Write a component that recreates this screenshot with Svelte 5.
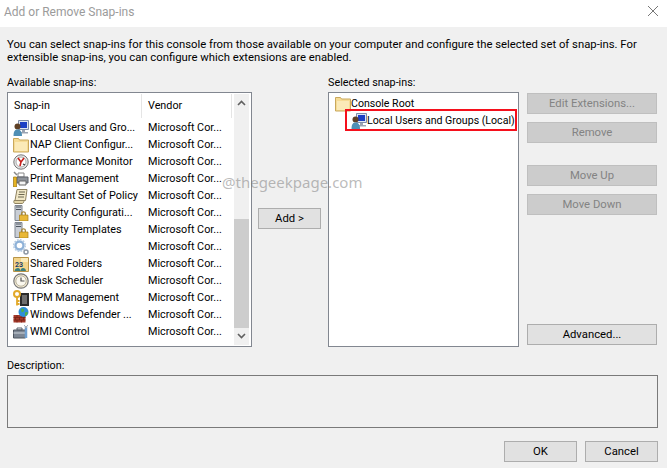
<script lang="ts">
	const vendor = 'Microsoft Cor...';
	const snapins = [
		{ name: 'Local Users and Gro...', icon: 'users' },
		{ name: 'NAP Client Configur...', icon: 'folder' },
		{ name: 'Performance Monitor', icon: 'perf' },
		{ name: 'Print Management', icon: 'print' },
		{ name: 'Resultant Set of Policy', icon: 'scroll' },
		{ name: 'Security Configurati...', icon: 'lock' },
		{ name: 'Security Templates', icon: 'lock' },
		{ name: 'Services', icon: 'gear' },
		{ name: 'Shared Folders', icon: 'shared' },
		{ name: 'Task Scheduler', icon: 'clock' },
		{ name: 'TPM Management', icon: 'tpm' },
		{ name: 'Windows Defender ...', icon: 'wall' },
		{ name: 'WMI Control', icon: 'wmi' }
	];
</script>

{#snippet icon(kind: string)}
	<svg class="icon" viewBox="0 0 16 16" width="16" height="16">
		{#if kind === 'folder'}
			<path d="M0.500 1.500h5l1 1.500h9v12h-15z" fill="#f6dc96" stroke="#c9a85c" />
			<path d="M2 5h12v9H2z" fill="#fbeab8" />
		{:else if kind === 'users'}
			<path d="M5.500 0.500h10v9h-10z" fill="#dfe6f2" stroke="#7f8da8" />
			<path d="M7 2h7v6H7z" fill="#1c3fc4" />
			<path d="M9 10h3v2h3v1.500H7V12h2z" fill="#9aa4b4" />
			<circle cx="4.500" cy="6.500" r="3" fill="#5f4026" />
			<path d="M0.500 16c0-5 1.500-6.500 4-6.500s4.500 1.500 4.500 6.500z" fill="#4f8fb5" />
		{:else if kind === 'perf'}
			<circle cx="8" cy="8" r="7.200" fill="#e8e8e8" stroke="#777" />
			<circle cx="8" cy="8" r="5" fill="#fff" stroke="#aaa" />
			<path d="M5 4l3 4-1 4M8 8l3-4" fill="none" stroke="#c8201c" stroke-width="1.600" />
			<path d="M10 10l2 1" stroke="#333" stroke-width="1.200" />
		{:else if kind === 'print'}
			<path d="M1 1l3 3" stroke="#888" stroke-width="1.500" />
			<path d="M5 2h6v4H5z" fill="#fff" stroke="#888" />
			<path d="M4 6h11v6H4z" fill="#8d9299" stroke="#5c6068" />
			<path d="M6 10h7v4H6z" fill="#f4f4f4" stroke="#666" />
			<path d="M0.500 6h3v10h-3z" fill="#e6b422" stroke="#9a7412" stroke-width="0.700" />
		{:else if kind === 'scroll'}
			<path d="M4 1.500h10l-1.500 11H2z" fill="#f1e8c8" stroke="#8f8260" />
			<path d="M1 12.500h10c0 2-1 3-2 3H2c-1 0-1.500-1.500-1-3z" fill="#e2d5a8" stroke="#8f8260" />
			<path d="M6 4h6M5.500 6.500h6M5 9h6" stroke="#6b6650" />
		{:else if kind === 'lock'}
			<path d="M2 0.500h7v15H2z" fill="#c9ced6" stroke="#7e858f" />
			<path d="M3 2h5M3 4.500h5" stroke="#4e5660" />
			<path d="M8 8.500c0-3 5-3 5 0v2h-1.300V8.500c0-1.300-2.400-1.300-2.400 0v2H8z" fill="#a98a3c" />
			<path d="M6.500 10h8.500v6H6.500z" fill="#e9b838" stroke="#a67f1c" stroke-width="0.700" />
		{:else if kind === 'gear'}
			<circle cx="6.500" cy="6.500" r="4" fill="none" stroke="#8fb2d8" stroke-width="2.400" />
			<circle cx="6.500" cy="6.500" r="5.800" fill="none" stroke="#b5cbe2" stroke-width="1.500" stroke-dasharray="1.800 1.200" />
			<circle cx="13" cy="13" r="2" fill="none" stroke="#8d97a3" stroke-width="1.500" />
		{:else if kind === 'shared'}
			<path d="M0.500 1.500h15v14h-15z" fill="#f3d48a" stroke="#b89448" />
			<path d="M8 2h7v4H8z" fill="#fbeab8" />
			<text class="shared-num" x="2" y="11">23</text>
			<path d="M1.500 15c0-2 2-3 3.500-3s2 1 2.500 3zM7.500 15c0-2 1-3 2.500-3s3 1 3 3z" fill="#3d7f7d" />
		{:else if kind === 'clock'}
			<circle cx="8" cy="8" r="7.200" fill="#f3ead2" stroke="#777" stroke-width="1.200" />
			<circle cx="8" cy="8" r="5.200" fill="#fbf8ee" stroke="#b9b39e" />
			<path d="M8 4.500V8h3.500" fill="none" stroke="#555" stroke-width="1.200" />
		{:else if kind === 'tpm'}
			<path d="M7 3h9v13H7z" fill="#2b2b2b" />
			<path d="M9 5h5v9H9z" fill="#6e6e6e" />
			<circle cx="4" cy="4" r="3" fill="none" stroke="#e2a92a" stroke-width="2" />
			<path d="M4 7v8.500M4 11h2.500M4 14h2.500" stroke="#e2a92a" stroke-width="1.800" fill="none" />
		{:else if kind === 'wall'}
			<path d="M0.500 8h12v7.500H0.500z" fill="#a5392a" />
			<path d="M0.500 10.500h12M0.500 13h12M4 8v2.500M8.500 8v2.500M2.500 10.500V13M6.500 10.500V13M10.500 10.500V13M4 13v2.500M8.500 13v2.500" stroke="#6e2015" stroke-width="0.700" />
			<circle cx="10.500" cy="5" r="5" fill="#2e8fd8" />
			<path d="M8 2c2-1 3 0 3 1.500s-2 2-2.500 1.500zM12 5.500c1-1 2-.5 3 0-.5 2-2 3.500-3 3.500z" fill="#4fb04a" />
		{:else if kind === 'wmi'}
			<path d="M0.500 6h12v8h-12z" fill="#7d8794" stroke="#4e5661" />
			<path d="M4 4h5v2H4z" fill="none" stroke="#59616d" />
			<path d="M0.500 9h12" stroke="#cfd5dc" />
			<path d="M13 2v12" stroke="#6f9fd0" stroke-width="2.500" />
			<path d="M11 1l3 3M15 1l-3 3" stroke="#a4adb8" />
		{/if}
	</svg>
{/snippet}

<div class="dialog">
	<header class="titlebar">
		<span>Add or Remove Snap-ins</span>
		<svg class="close" viewBox="0 0 10 10" width="10" height="10">
			<path d="M0 0l10 10M10 0L0 10" stroke="#777" fill="none" />
		</svg>
	</header>

	<main class="content">
		<p class="intro">
			You can select snap-ins for this console from those available on your computer and configure the selected set of snap-ins. For<br />
			extensible snap-ins, you can configure which extensions are enabled.
		</p>

		<div class="columns">
			<section class="available">
				<div class="label">Available snap-ins:</div>
				<div class="listbox">
					<div class="list">
						<div class="list-head">
							<span class="col-name">Snap-in</span>
							<span class="col-vendor">Vendor</span>
						</div>
						{#each snapins as item}
							<div class="row">
								{@render icon(item.icon)}
								<span class="name">{item.name}</span>
								<span class="vendor">{vendor}</span>
							</div>
						{/each}
					</div>
					<div class="scrollbar">
						<svg class="arrow" viewBox="0 0 9 6" width="9" height="6">
							<path d="M1 5l3.500-3.500L8 5" fill="none" stroke="#606060" stroke-width="1.600" />
						</svg>
						<div class="track"><div class="thumb"></div></div>
						<svg class="arrow" viewBox="0 0 9 6" width="9" height="6">
							<path d="M1 1l3.500 3.500L8 1" fill="none" stroke="#606060" stroke-width="1.600" />
						</svg>
					</div>
				</div>
			</section>

			<div class="add-col">
				<button class="btn add">Add &gt;</button>
			</div>

			<section class="selected">
				<div class="label">Selected snap-ins:</div>
				<div class="tree">
					<div class="node">
						{@render icon('folder')}
						<span>Console Root</span>
					</div>
					<div class="node child">
						{@render icon('users')}
						<span>Local Users and Groups (Local)</span>
					</div>
				</div>
			</section>

			<div class="actions">
				<button class="btn" disabled>Edit Extensions...</button>
				<button class="btn" disabled>Remove</button>
				<button class="btn spaced" disabled>Move Up</button>
				<button class="btn" disabled>Move Down</button>
				<button class="btn advanced">Advanced...</button>
			</div>
		</div>

		<div class="label description-label">Description:</div>
		<div class="description"></div>

		<div class="footer">
			<button class="btn ok">OK</button>
			<button class="btn cancel">Cancel</button>
		</div>
	</main>

	<div class="watermark">@thegeekpage.com</div>
</div>

<style>
	:global(body) {
		margin: 0;
		background: #f0f0f0;
	}

	.dialog {
		position: relative;
		width: 667px;
		height: 468px;
		overflow: hidden;
		background: #f0f0f0;
		color: #000;
		font-family: 'Roboto', sans-serif;
		font-size: 10.8px;
		line-height: 17px;
	}

	.titlebar {
		display: flex;
		align-items: center;
		justify-content: space-between;
		height: 27px;
		padding: 0 9px 3px 4px;
		box-sizing: border-box;
		background: #fff;
		color: #9b9b9b;
		font-size: 12px;
	}

	.close {
		margin-top: -2px;
	}

	.content {
		padding: 11px 9px 0 7px;
	}

	.intro {
		margin: 0;
		font-size: 11.3px;
		line-height: 13px;
		white-space: nowrap;
	}

	.columns {
		display: flex;
		margin-top: 11px;
		height: 272px;
	}

	.label {
		height: 17px;
		line-height: 15px;
	}

	.available {
		width: 245px;
	}

	.listbox {
		display: flex;
		box-sizing: border-box;
		height: 255px;
		border: 1px solid #828790;
		background: #fff;
	}

	.list {
		width: 226px;
	}

	.list-head {
		display: flex;
		height: 26px;
		align-items: center;
	}

	.col-name {
		width: 134px;
		padding-left: 6px;
		height: 24px;
		line-height: 24px;
		box-sizing: border-box;
		border-right: 1px solid #e5e5e5;
	}

	.col-vendor {
		width: 90px;
		padding-left: 6px;
		height: 24px;
		line-height: 24px;
		box-sizing: border-box;
		border-right: 1px solid #e5e5e5;
	}

	.row {
		display: flex;
		align-items: center;
		height: 17px;
		padding-left: 5px;
	}

	.icon {
		flex: none;
	}

	.shared-num {
		font-size: 7px;
		font-weight: 700;
		fill: #1c3f6e;
	}

	.name {
		width: 118px;
		margin-left: 1px;
		white-space: nowrap;
	}

	.vendor {
		white-space: nowrap;
	}

	.scrollbar {
		display: flex;
		flex-direction: column;
		align-items: center;
		width: 15px;
		margin: 1px 0 1px 0;
		background: #f0f0f0;
	}

	.arrow {
		flex: none;
		margin: 6px 0;
	}

	.track {
		flex: 1;
		width: 100%;
		display: flex;
		flex-direction: column;
		justify-content: flex-end;
	}

	.thumb {
		height: 109px;
		margin-bottom: -1px;
		background: #cdcdcd;
	}

	.add-col {
		width: 76px;
		display: flex;
		align-items: flex-start;
		padding: 133px 0 0 6px;
		box-sizing: border-box;
	}

	.btn {
		box-sizing: border-box;
		height: 21px;
		padding: 0;
		border: 1px solid #adadad;
		background: #e1e1e1;
		color: #000;
		font: inherit;
		font-size: 11.3px;
	}

	.btn:disabled {
		border-color: #bfbfbf;
		background: #cccccc;
		color: #838383;
	}

	.add {
		width: 63px;
	}

	.selected {
		width: 191px;
	}

	.tree {
		box-sizing: border-box;
		height: 255px;
		padding-top: 2px;
		border: 1px solid #828790;
		background: #fff;
	}

	.node {
		display: flex;
		align-items: center;
		height: 17px;
		padding-left: 6px;
		font-size: 10.6px;
		white-space: nowrap;
	}

	.child {
		position: relative;
		padding-left: 22px;
	}

	.child::after {
		content: '';
		position: absolute;
		left: 16px;
		top: -3px;
		width: 172px;
		height: 22px;
		box-sizing: border-box;
		border: 2px solid #f5101c;
	}

	.actions {
		display: flex;
		flex-direction: column;
		gap: 8px;
		width: 130px;
		margin-left: 8px;
		padding-top: 18px;
		box-sizing: border-box;
	}

	.actions .spaced {
		margin-top: 14px;
	}

	.actions .advanced {
		margin-top: auto;
		margin-bottom: 2px;
	}

	.description-label {
		margin-top: 11px;
	}

	.description {
		box-sizing: border-box;
		height: 53px;
		border: 1px solid #7a7a7a;
	}

	.footer {
		display: flex;
		justify-content: flex-end;
		gap: 8px;
		margin-top: 13px;
	}

	.ok,
	.cancel {
		width: 73px;
	}

	.watermark {
		position: absolute;
		left: 222px;
		top: 173px;
		color: rgba(120, 120, 120, 0.5);
		font-family: 'Noto Sans', sans-serif;
		font-size: 15px;
		line-height: 18px;
		white-space: nowrap;
	}
</style>
